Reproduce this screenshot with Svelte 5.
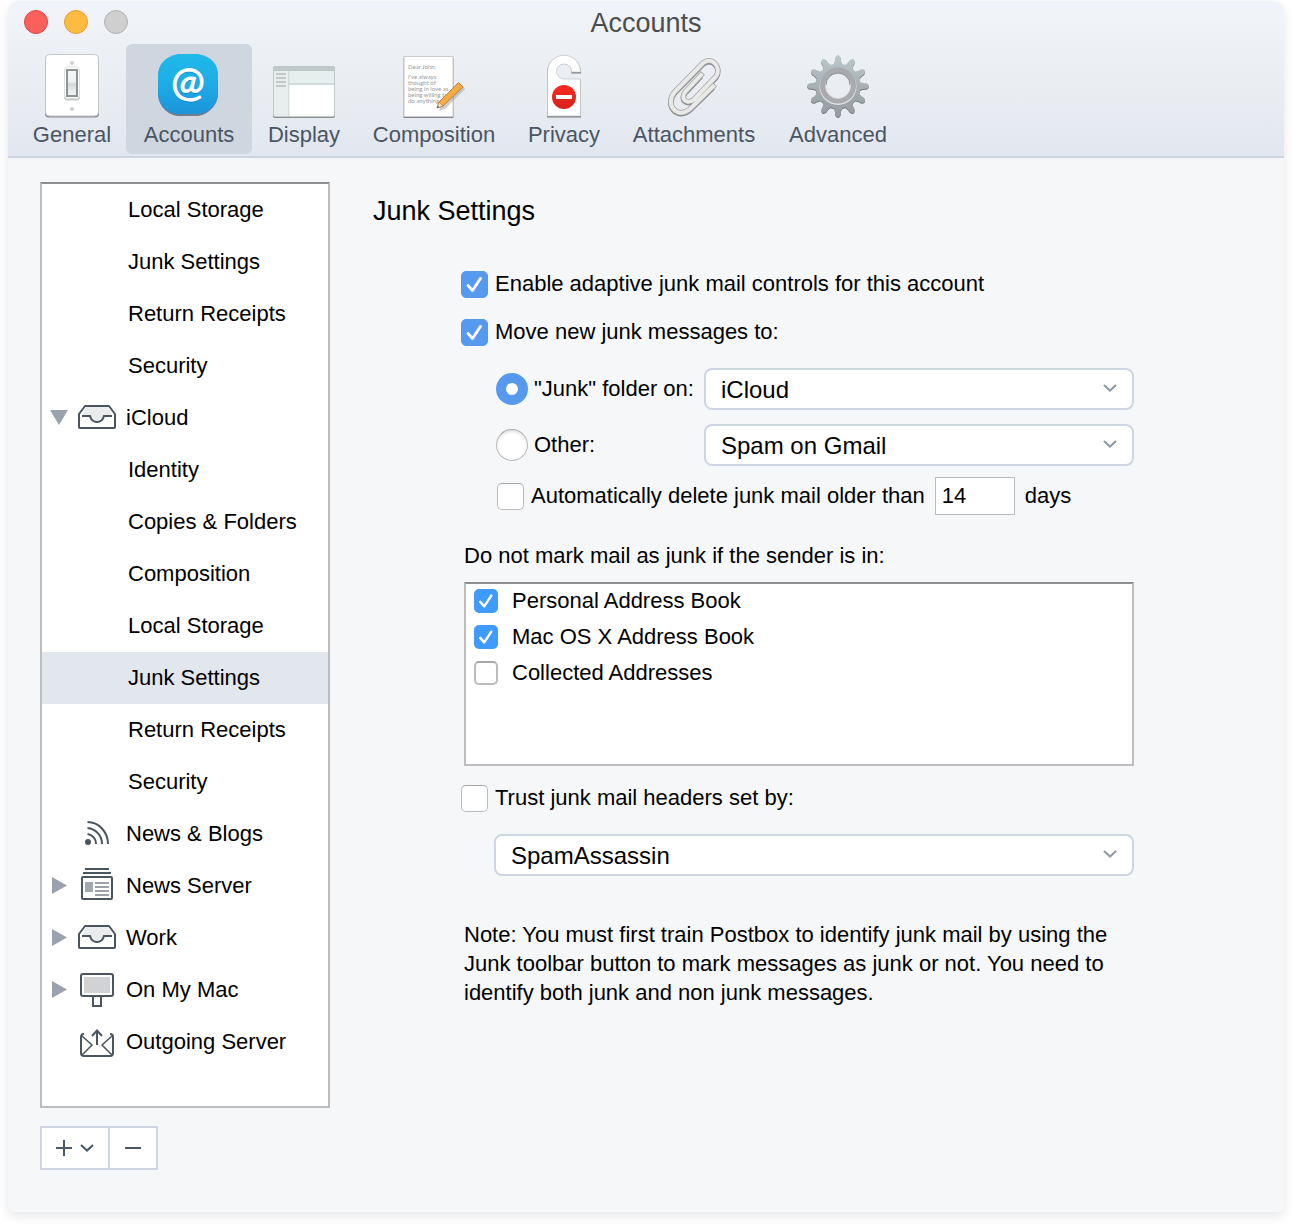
<script>
  const tabs = ['General', 'Accounts', 'Display', 'Composition', 'Privacy', 'Attachments', 'Advanced'];
  let activeTab = $state('Accounts');

  const tree = [
    { id: 1, label: 'Local Storage' },
    { id: 2, label: 'Junk Settings' },
    { id: 3, label: 'Return Receipts' },
    { id: 4, label: 'Security' },
    { id: 5, label: 'iCloud', icon: 'tray', arrow: 'down' },
    { id: 6, label: 'Identity' },
    { id: 7, label: 'Copies & Folders' },
    { id: 8, label: 'Composition' },
    { id: 9, label: 'Local Storage' },
    { id: 10, label: 'Junk Settings' },
    { id: 11, label: 'Return Receipts' },
    { id: 12, label: 'Security' },
    { id: 13, label: 'News & Blogs', icon: 'rss' },
    { id: 14, label: 'News Server', icon: 'news', arrow: 'right' },
    { id: 15, label: 'Work', icon: 'tray', arrow: 'right' },
    { id: 16, label: 'On My Mac', icon: 'mac', arrow: 'right' },
    { id: 17, label: 'Outgoing Server', icon: 'outgoing' }
  ];
  let selected = $state(10);

  let adaptive = $state(true);
  let moveJunk = $state(true);
  let target = $state('junk');
  let autoDelete = $state(false);
  let days = $state('14');
  let trust = $state(false);
  let books = $state([
    { label: 'Personal Address Book', on: true },
    { label: 'Mac OS X Address Book', on: true },
    { label: 'Collected Addresses', on: false }
  ]);

  const teeth = Array.from({ length: 12 }, (_, i) => i * 30);
</script>

{#snippet tick()}
  <svg class="tick" viewBox="0 0 27 27" aria-hidden="true">
    <path d="M7 14.5l4.5 5L19.500 7.500" fill="none" stroke="#fff" stroke-width="2.8" stroke-linecap="round" stroke-linejoin="round" />
  </svg>
{/snippet}

{#snippet chevron()}
  <svg class="chevron" viewBox="0 0 14 8" aria-hidden="true">
    <path d="M1 1l6 5.6L13 1" fill="none" stroke="currentColor" stroke-width="2" />
  </svg>
{/snippet}

{#snippet tabIcon(name)}
  <svg class="tab-icon" viewBox="0 0 64 64" aria-hidden="true">
    {#if name === 'General'}
      <rect x="5" y="1.5" width="54" height="62" rx="4" fill="#85878a" />
      <rect x="5.5" y=".5" width="53" height="61.5" rx="4" fill="#fff" stroke="#c4c6ca" />
      <circle cx="32" cy="9" r="2" fill="#cdcfd0" />
      <circle cx="32" cy="55" r="2" fill="#cdcfd0" />
      <rect x="24" y="14.5" width="16" height="32" rx="3.5" fill="#c6c8ca" />
      <rect x="24.5" y="13" width="15" height="31.5" rx="3" fill="#fff" stroke="#dcdedf" />
      <rect x="27" y="16" width="10" height="26" fill="url(#switch)" stroke="#8e9494" stroke-width="2" />
    {:else if name === 'Accounts'}
      <path d="M21 1h20c14 3 20 10 20 22v17c0 10-8 20-20 22H21C10 61 1 51 1 40V23C1 11 8 4 21 1z" fill="#46576a" opacity=".7" />
      <path d="M21 0h20c14 3 20 10 20 22v17c0 10-8 20-20 21H21C10 60 1 50 1 39V22C1 10 8 3 21 0z" fill="url(#sky)" />
      <text x="31" y="43" class="at" fill="#1579ad" stroke="#1579ad" opacity=".5">@</text>
      <text x="31" y="42" class="at" fill="#fff" stroke="#fff">@</text>
    {:else if name === 'Display'}
      <rect x="1" y="14" width="62" height="50" rx="2" fill="#8b9292" />
      <rect x="1.5" y="12.5" width="61" height="50" rx="2" fill="#e6eeee" stroke="#c2c9c9" />
      <path d="M1 17v-3q0-2 2-2h58q2 0 2 2v3z" fill="#c0c8c8" />
      <rect x="16" y="17" width="1.5" height="45" fill="#d3dada" />
      <rect x="17" y="29" width="45" height="2" fill="#d3dada" />
      <rect x="17.500" y="31" width="44.500" height="31" fill="#fff" />
      <path d="M4 20h10M4 24h10M4 28h10M4 32h10" stroke="#c0c8c8" stroke-width="2" />
    {:else if name === 'Composition'}
      <rect x="1.500" y="4" width="50" height="60" fill="#85878a" />
      <rect x="2" y="2.500" width="49" height="60" fill="#fff" stroke="#c8cacd" />
      <g class="note" fill="#98999b">
        <text x="6" y="15">Dear John,</text>
        <text x="6" y="25">I've always</text>
        <text x="6" y="31">thought of</text>
        <text x="6" y="37">being in love as</text>
        <text x="6" y="43">being willing to</text>
        <text x="6" y="49">do anything</text>
      </g>
      <path d="M37 57l6-2 20-20-3-4-22 22z" fill="#9a9da3" opacity=".5" />
      <path d="M35 54l2-6L56.500 28.500l4.500 4.500L41 52z" fill="#f5aa43" stroke="#a87238" stroke-width=".8" />
      <path d="M35 54l2-6 4 4z" fill="#f6dfb8" stroke="#a87238" stroke-width=".6" />
      <path d="M35 54l.8-2.200 1.400 1.400z" fill="#555" />
    {:else if name === 'Privacy'}
      <path d="M15 63.500V18A17 17 0 0 1 49 19.500H39.500A8 8 0 1 0 32 26H49V63.500z" fill="#797c80" />
      <path d="M15.500 62V17.500A16.500 16.500 0 0 1 48.500 18H39.500A7.500 7.500 0 1 0 32 25H48.500V62z" fill="#fff" stroke="#c4c6ca" stroke-width=".8" />
      <circle cx="32" cy="43" r="12" fill="url(#stop)" />
      <rect x="24" y="41" width="16" height="4" fill="#fff" />
    {:else if name === 'Attachments'}
      <g fill="none">
        <path d="M39 22L24 38C17 46 25 52 32 46.500L54 23.500C60 14 50 3 41 10L13 38.500C2 51 15 67 28 56L51 33.500" stroke="#85888a" stroke-width="5.500" />
        <path d="M39 21L24 37C17 45 25 51 32 45.500L54 22.500C60 13 50 2 41 9L13 37.500C2 50 15 66 28 55L51 32.500" stroke="#a2a5a6" stroke-width="5.500" stroke-linecap="square" />
        <path d="M39 21L24 37C17 45 25 51 32 45.500L54 22.500C60 13 50 2 41 9L13 37.500C2 50 15 66 28 55L51 32.500" stroke="#e9e9e7" stroke-width="4" stroke-linecap="square" />
      </g>
    {:else}
      <clipPath id="gear">
        <circle cx="32" cy="32" r="22.500" />
        {#each teeth as a}
          <path d="M27 11q2.200-2 2.200-7.500 2.800-5 5.600 0Q34.800 9 37 11z" transform="rotate({a} 32 32)" />
        {/each}
      </clipPath>
      <g transform="translate(0 1)"><rect width="64" height="64" fill="#74787b" clip-path="url(#gear)" /></g>
      <rect width="64" height="64" fill="url(#steel)" clip-path="url(#gear)" />
      <circle cx="32" cy="32.500" r="18.500" fill="#e2e4e5" />
      <circle cx="32" cy="31.500" r="18" fill="#a8aaad" />
      <circle cx="32" cy="32" r="12.500" fill="#eaedf2" stroke="#d5d7d9" />
      <path d="M20 31a12 12 0 0 1 24 0" fill="none" stroke="#909396" />
    {/if}
  </svg>
{/snippet}

{#snippet treeIcon(name)}
  <svg class="tree-icon" viewBox="0 0 38 36" aria-hidden="true" fill="none" stroke="#4b5560" stroke-width="2">
    {#if name === 'tray'}
      <path d="M8 7h22l4 9h-8q-1.500 6-7 6t-7-6H4z" fill="#e9ebed" stroke="none" />
      <path d="M7 6h24l6 8v13q0 1-1 1H2q-1 0-1-1V14z" stroke-linejoin="round" />
      <path d="M4 16h8q1.500 6 7 6t7-6h8" />
    {:else if name === 'rss'}
      <circle cx="10" cy="26" r="3" fill="#4b5560" stroke="none" />
      <path d="M9.500 18A9.500 9.500 0 0 1 18 28M9.500 12A16 16 0 0 1 24 28M9.500 6A20.500 22 0 0 1 30 28" />
    {:else if name === 'news'}
      <path d="M7 1h24M5 5h28" />
      <rect x="4" y="9" width="30" height="22" rx="1" />
      <rect x="7" y="14" width="8" height="10" fill="#a2a8b0" stroke="none" />
      <path d="M17 15h14M17 19h14M17 23h14M17 27h14" stroke="#9ba1a9" />
    {:else if name === 'mac'}
      <rect x="3" y="2" width="32" height="22" rx="2" />
      <rect x="6" y="5" width="26" height="16" fill="#d1d2d6" stroke="none" />
      <path d="M15 24v10h8V24" />
    {:else}
      <path d="M6 10q-3 0-3 3v16q0 3 3 3h26q3 0 3-3V13q0-3-3-3" />
      <path d="M4 12l10 9L4 31M34 12l-10 9 10 10" stroke-width="1.500" />
      <path d="M19 21V7M14 12l5-5.500 5 5.500" />
    {/if}
  </svg>
{/snippet}

<svg class="defs" aria-hidden="true">
  <defs>
    <linearGradient id="switch" x2="0" y2="1"><stop offset="0" stop-color="#f5f8f8" /><stop offset=".45" stop-color="#eef1f1" /><stop offset=".55" stop-color="#d4dada" /><stop offset="1" stop-color="#f5f8f8" /></linearGradient>
    <linearGradient id="sky" x2="0" y2="1"><stop offset="0" stop-color="#20b9ea" /><stop offset=".5" stop-color="#1eace6" /><stop offset="1" stop-color="#1b93da" /></linearGradient>
    <linearGradient id="stop" x2="0" y2="1"><stop offset="0" stop-color="#fb2a20" /><stop offset="1" stop-color="#d8211c" /></linearGradient>
    <linearGradient id="steel" x2="0" y2="1"><stop offset="0" stop-color="#bdc8cb" /><stop offset="1" stop-color="#94999e" /></linearGradient>
  </defs>
</svg>

<div class="window">
  <header>
    <div class="titlebar">
      <div class="lights">
        <button class="light red" aria-label="Close"></button>
        <button class="light yellow" aria-label="Minimize"></button>
        <button class="light grey" aria-label="Zoom" disabled></button>
      </div>
      <h1>Accounts</h1>
    </div>
    <nav class="tabs" aria-label="Preferences">
      {#each tabs as tab}
        <button class="tab" class:active={tab === activeTab} onclick={() => (activeTab = tab)}>
          {@render tabIcon(tab)}
          <span>{tab}</span>
        </button>
      {/each}
    </nav>
  </header>

  <main>
    <aside>
      <ul class="tree">
        {#each tree as item (item.id)}
          <li>
            <button class="row" class:selected={item.id === selected} class:top={item.icon} onclick={() => (selected = item.id)}>
              {#if item.icon}
                <span class="arrow">
                  {#if item.arrow}
                    <svg viewBox="0 0 18 18" aria-hidden="true">
                      <path d={item.arrow === 'down' ? 'M0 1h18L9 16z' : 'M2 0v17l15-8.5z'} fill="#9aa2ad" />
                    </svg>
                  {/if}
                </span>
                {@render treeIcon(item.icon)}
              {/if}
              <span>{item.label}</span>
            </button>
          </li>
        {/each}
      </ul>
      <div class="tools">
        <button class="add" aria-label="Add account">
          <svg class="glyph" viewBox="0 0 16 16" aria-hidden="true"><path d="M0 8h16M8 0v16" stroke="currentColor" stroke-width="2" /></svg>
          {@render chevron()}
        </button>
        <button class="remove" aria-label="Remove account">
          <svg class="glyph" viewBox="0 0 16 16" aria-hidden="true"><path d="M0 8h16" stroke="currentColor" stroke-width="2" /></svg>
        </button>
      </div>
    </aside>

    <section>
      <h2>Junk Settings</h2>
      <form onsubmit={(e) => e.preventDefault()}>
        <label class="line">
          <span class="check"><input type="checkbox" bind:checked={adaptive} />{@render tick()}</span>
          <span>Enable adaptive junk mail controls for this account</span>
        </label>
        <label class="line">
          <span class="check"><input type="checkbox" bind:checked={moveJunk} />{@render tick()}</span>
          <span>Move new junk messages to:</span>
        </label>

        <div class="targets">
          <label class="choice">
            <input type="radio" name="target" value="junk" bind:group={target} />
            <span>"Junk" folder on:</span>
          </label>
          <div class="select">
            <select aria-label="Junk folder account"><option>iCloud</option><option>Gmail</option></select>
            {@render chevron()}
          </div>
          <label class="choice">
            <input type="radio" name="target" value="other" bind:group={target} />
            <span>Other:</span>
          </label>
          <div class="select">
            <select aria-label="Other folder"><option>Spam on Gmail</option></select>
            {@render chevron()}
          </div>
        </div>

        <div class="line indent">
          <label class="line">
            <span class="check"><input type="checkbox" bind:checked={autoDelete} />{@render tick()}</span>
            <span>Automatically delete junk mail older than</span>
          </label>
          <input id="days" class="days" type="text" bind:value={days} />
          <label for="days">days</label>
        </div>

        <fieldset>
          <legend>Do not mark mail as junk if the sender is in:</legend>
          <div class="books">
            {#each books as book}
              <label class="book">
                <span class="check small"><input type="checkbox" bind:checked={book.on} />{@render tick()}</span>
                <span>{book.label}</span>
              </label>
            {/each}
          </div>
        </fieldset>

        <label class="line trust">
          <span class="check"><input type="checkbox" bind:checked={trust} />{@render tick()}</span>
          <span>Trust junk mail headers set by:</span>
        </label>
        <div class="select wide">
          <select aria-label="Junk mail header source"><option>SpamAssassin</option></select>
          {@render chevron()}
        </div>

        <p>Note: You must first train Postbox to identify junk mail by using the Junk toolbar button to mark messages as junk or not. You need to identify both junk and non junk messages.</p>
      </form>
    </section>
  </main>
</div>

<style>
  :global(body) {
    background: #fff;
  }
  * {
    box-sizing: border-box;
  }
  .window,
  button,
  input,
  select {
    font-family: 'Liberation Sans', Arial, sans-serif;
    font-size: 22px;
    color: #000;
  }
  button {
    margin: 0;
    padding: 0;
    border: 0;
    background: none;
    text-align: left;
  }
  svg {
    display: block;
    flex: none;
  }
  .defs {
    position: absolute;
    width: 0;
    height: 0;
  }
  .window {
    margin: 1px 8px 18px;
    border-radius: 10px 10px 6px 6px;
    background: #f5f7f9;
    box-shadow: 0 4px 12px rgba(0, 0, 0, 0.1);
    overflow: hidden;
  }

  header {
    border-bottom: 2px solid #ced5e0;
    background: linear-gradient(#f1f4f9, #e8ecf1 65%, #e2e7f0);
  }
  .titlebar {
    display: grid;
    grid-template-columns: 1fr auto 1fr;
    align-items: center;
    height: 43px;
    padding: 0 16px;
  }
  .lights {
    display: flex;
    gap: 16px;
    padding-bottom: 2px;
  }
  .light {
    width: 24px;
    height: 24px;
    border: 1px solid;
    border-radius: 50%;
  }
  .red {
    border-color: #e0443f;
    background: #fc605c;
  }
  .yellow {
    border-color: #de9f34;
    background: #fdbc40;
  }
  .grey {
    border-color: #b2b2b2;
    background: #cfcfcf;
  }
  h1 {
    margin: 0;
    color: #4d4d4f;
    font-size: 27px;
    font-weight: 400;
    line-height: 30px;
  }
  .tabs {
    display: grid;
    grid-template-columns: 108px 126px 104px 156px 104px 156px 132px;
    padding: 0 10px 2px;
  }
  .tab {
    display: flex;
    flex-direction: column;
    align-items: center;
    padding: 10px 0 2px;
    border-radius: 6px;
    color: #4a5563;
    line-height: 34px;
  }
  .tab.active {
    background: #d0d6e0;
  }
  .tab-icon {
    width: 64px;
    height: 64px;
  }
  .at {
    font: 40px Lato, sans-serif;
    text-anchor: middle;
  }
  .note {
    font: 6px Lato, sans-serif;
  }

  main {
    display: flex;
    padding: 24px 150px 42px 32px;
  }
  aside {
    flex: none;
    width: 290px;
  }
  .tree {
    margin: 0;
    padding: 0 0 38px;
    border: 2px solid #bdbdbf;
    border-top-color: #8e8e90;
    background: #fff;
    list-style: none;
  }
  .row {
    display: flex;
    align-items: center;
    width: 100%;
    height: 52px;
    padding-left: 86px;
    line-height: 28px;
  }
  .row.top {
    gap: 10px;
    padding-left: 8px;
  }
  .row.selected {
    background: #e2e6ed;
  }
  .arrow,
  .arrow svg {
    width: 18px;
    height: 18px;
  }
  .tree-icon {
    width: 38px;
    height: 36px;
  }
  .tools {
    display: flex;
    width: max-content;
    margin-top: 18px;
    border: 2px solid #ced5e0;
    background: #fff;
  }
  .tools button {
    display: flex;
    align-items: center;
    height: 40px;
    padding: 0 14px;
    gap: 8px;
    color: #4b5967;
  }
  .tools .remove {
    padding: 0 15px;
    border-left: 2px solid #ced5e0;
  }
  .glyph {
    width: 16px;
    height: 16px;
  }
  .chevron {
    width: 14px;
    height: 8px;
  }

  section {
    flex: 1;
    min-width: 0;
    padding-left: 43px;
  }
  h2 {
    margin: 14px 0 34px;
    font-size: 27px;
    font-weight: 400;
    line-height: 30px;
  }
  form {
    padding-left: 88px;
    line-height: 28px;
  }
  .line {
    display: flex;
    align-items: center;
    height: 48px;
    gap: 7px;
  }
  .check {
    display: grid;
    flex: none;
    width: 27px;
    height: 27px;
  }
  .check input,
  .tick {
    grid-area: 1 / 1;
    width: 100%;
    height: 100%;
  }
  .check input,
  .choice input {
    appearance: none;
    margin: 0;
    border: 1px solid #bcbcbe;
    border-top-color: #a6a6a8;
    background: #fff;
  }
  .check input {
    border-radius: 5px;
  }
  .check input:checked {
    border-color: #5697ef;
    background: #5899f0;
  }
  .tick {
    visibility: hidden;
    pointer-events: none;
  }
  input:checked + :global(.tick) {
    visibility: visible;
  }
  .targets {
    display: grid;
    grid-template-columns: 208px 1fr;
    row-gap: 14px;
    margin: 12px 0 6px 35px;
  }
  .choice {
    display: flex;
    align-items: center;
    gap: 6px;
    white-space: nowrap;
  }
  .choice input {
    flex: none;
    width: 32px;
    height: 32px;
    border-radius: 50%;
    box-shadow: inset 0 2px 3px #e2e2e2;
  }
  .choice input:checked {
    border: 10px solid #5899f0;
    box-shadow: none;
  }
  .select {
    display: grid;
    align-items: center;
  }
  .select select {
    grid-area: 1 / 1;
    appearance: none;
    width: 100%;
    height: 42px;
    padding: 0 40px 0 15px;
    border: 2px solid #ced6e3;
    border-radius: 8px;
    background: #fff;
    font-size: 24px;
  }
  .select .chevron {
    grid-area: 1 / 1;
    justify-self: end;
    margin: 0 17px 2px 0;
    color: #8f99a5;
    pointer-events: none;
  }
  .indent {
    gap: 10px;
    margin-left: 36px;
  }
  .days {
    width: 80px;
    height: 38px;
    padding: 0 6px;
    border: 1px solid #bdbdbf;
    background: #fff;
  }
  fieldset {
    margin: 22px 0 0 3px;
    padding: 0;
    border: 0;
  }
  legend {
    padding: 0;
    margin-bottom: 12px;
  }
  .books {
    min-height: 184px;
    border: 2px solid #bdbdbf;
    border-top-color: #8e8e90;
    background: #fff;
  }
  .book {
    display: flex;
    align-items: center;
    gap: 14px;
    height: 36px;
    padding: 0 8px 2px;
  }
  .check.small {
    width: 24px;
    height: 24px;
  }
  .small input {
    border-width: 2px;
  }
  .small input:checked {
    border-color: #3f9bfd;
    background: #3f9bfd;
  }
  .trust {
    margin-top: 8px;
  }
  .wide {
    margin: 12px 0 44px 33px;
  }
  p {
    margin: 0 0 0 3px;
    line-height: 29px;
  }
</style>
